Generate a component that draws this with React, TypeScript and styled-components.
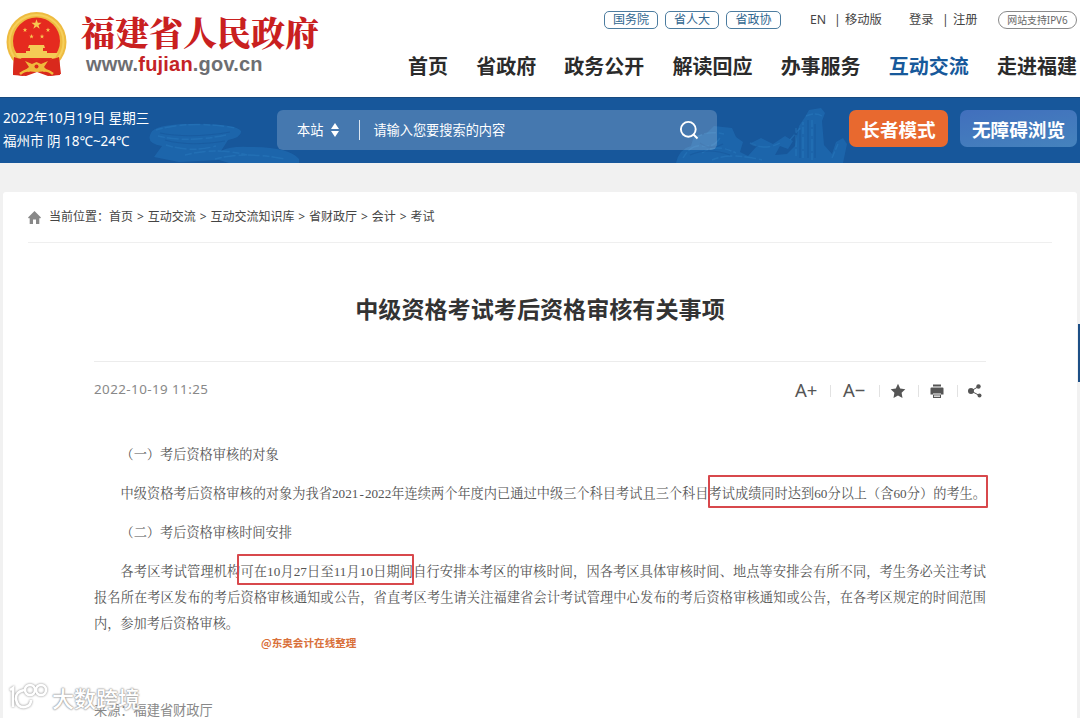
import React from "react";
import styled, { createGlobalStyle } from "styled-components";

const sans = `"Noto Sans", "Noto Sans CJK SC", sans-serif`;
const cjk = `"Noto Sans CJK SC", "Noto Sans", sans-serif`;

const Global = createGlobalStyle`
  * { box-sizing: border-box; }
  body { margin: 0; background: #f1f1f1; font-family: ${sans}; color: #333; overflow: hidden; }
`;

const Page = styled.div`
  width: 1080px; height: 718px; overflow: hidden; position: relative;
  display: flex; flex-direction: column;
`;
const Header = styled.header`
  height: 97px; background: #fff; display: flex; flex: none; padding-left: 5px;
`;
const Emblem = styled.svg`width: 63px; height: 66px; margin-top: 11px; flex: none;`;
const Brand = styled.div`margin-left: 13px; padding-top: 10px; width: 300px; flex: none; white-space: nowrap;`;
const BrandName = styled.div`
  font: 900 34px/44px "Noto Serif CJK SC", "Noto Sans CJK SC", serif; color: #c9201f; height: 44px;
`;
const BrandUrl = styled.div`
  font: bold 20px/20px "Liberation Sans", sans-serif; color: #6d6e72; padding-left: 5px; letter-spacing: 0.2px;
  b { color: #c42327; }
`;
const HeaderRight = styled.div`flex: 1; min-width: 0; display: flex; flex-direction: column; white-space: nowrap;`;
const TopLinks = styled.div`
  display: flex; align-items: center; height: 20px; margin-top: 10px; margin-left: 223px;
  font: 12.3px/18px ${sans}; color: #444;
`;
const Pill = styled.span<{ $w: number; $grey?: boolean }>`
  width: ${p => p.$w}px; height: 18px; border: 1px solid ${p => (p.$grey ? "#8a8a8a" : "#4c7c9f")};
  border-radius: ${p => (p.$grey ? 9 : 5)}px; color: ${p => (p.$grey ? "#666" : "#2f668f")};
  font-size: ${p => (p.$grey ? 9.9 : 12)}px; line-height: 16px; text-align: center; margin-right: 7px; flex: none;
`;
const TopText = styled.span<{ $w: number }>`width: ${p => p.$w}px; flex: none;`;
const Nav = styled.nav`
  display: flex; justify-content: space-between; margin: 20px 3px 0 27px;
  font: bold 20px/32px ${cjk}; color: #2b2b2b;
`;
const NavItem = styled.a<{ $active?: boolean }>`color: ${p => (p.$active ? "#17599b" : "inherit")};`;

const Banner = styled.section`
  height: 66px; flex: none; background: #17579b; display: flex; color: #fff; position: relative;
  border-top: 1px solid #174a80;
`;
const BannerArt = styled.svg`position: absolute; left: 0; top: 0; width: 1080px; height: 65px;`;
const Weather = styled.div`
  width: 277px; padding: 9px 0 0 3px; font: 13.5px/23px ${sans}; position: relative; white-space: nowrap;
`;
const Search = styled.div`
  width: 440px; height: 40px; margin-top: 12px; border-radius: 6px; background: rgba(255,255,255,.2);
  display: flex; align-items: center; font: 13.2px/20px ${sans}; padding: 0 18px 0 20px; position: relative;
`;
const Sorter = styled.svg`width: 8px; height: 14px; margin-left: 8px;`;
const Divider = styled.i`width: 1px; height: 20px; background: #dce6f1; margin: 0 13px 0 20px;`;
const Lens = styled.svg`width: 20px; height: 20px; margin-left: auto;`;
const ModeButton = styled.button<{ $w: number; $orange?: boolean }>`
  width: ${p => p.$w}px; height: 37px; margin-top: 12px; border: 0; border-radius: 7px; padding: 0;
  color: #fff; font: bold 18.6px/36px ${cjk}; position: relative; white-space: nowrap;
  background: ${p => (p.$orange ? "#e8692f" : "linear-gradient(170deg, #416fbd, #4583bd)")};
`;
const Modes = styled.div`display: flex; gap: 12px; margin-left: 132px;`;

const Card = styled.main`
  margin: 29px 3px 0; background: #fff; border-radius: 3px 3px 0 0; flex: 1; min-height: 0;
  display: flex; flex-direction: column; white-space: nowrap;
`;
const Crumbs = styled.div`
  height: 51px; margin: 0 25px; border-bottom: 1px solid #efefef; display: flex; align-items: center;
  font: 12px/18px ${sans}; color: #444; word-spacing: 0.8px; flex: none;
`;
const HomeIcon = styled.svg`width: 13px; height: 13px; margin-right: 8px; margin-top: 1px;`;
const Title = styled.h1`
  margin: 47px 0 0; text-align: center; font: bold 23.1px/36px ${cjk}; color: #333; height: 71px; flex: none;
`;
const Meta = styled.div`
  margin: 0 91px; border-top: 1px solid #ececec; height: 56px; display: flex; align-items: center; flex: none;
  justify-content: space-between; font: 13.4px/20px ${sans}; color: #888; padding-bottom: 2px;
`;
const Stamp = styled.time`letter-spacing: 0.42px;`;
const Tools = styled.div`display: flex; align-items: center; color: #555; padding-top: 4px;`;
const FontTool = styled.span<{ $last?: boolean }>`
  font: 18.5px/20px ${sans}; width: 24px; margin-right: ${p => (p.$last ? 12 : 11)}px; margin-top: -2px;
`;
const Bar = styled.i<{ $gap: number }>`width: 1px; height: 12px; background: #e2e2e2; margin-right: ${p => p.$gap}px;`;
const ToolIcon = styled.svg<{ $gap: number }>`width: 16px; height: 16px; margin-right: ${p => p.$gap}px;`;

const Article = styled.article`
  padding: 25px 91px 0; font: 13.2px/26px "Liberation Serif", "Noto Serif CJK SC", "Noto Sans CJK SC", serif; color: #555;
  font-weight: 400;
`;
const Line = styled.p<{ $indent?: boolean; $fill?: boolean; $gap?: number }>`
  margin: 0 0 ${p => p.$gap ?? 0}px; height: 26px; padding-left: ${p => (p.$indent ? 26.5 : 0)}px;
  text-align-last: ${p => (p.$fill ? "justify" : "left")};
`;
const Years = styled.span`display: inline-flex;`;
const Dash = styled.span`padding: 0 1.1px;`;
const Mark = styled.span`position: relative;`;
const Frame = styled.i<{ $w: number; $l: number; $t: number; $h: number }>`
  position: absolute; left: ${p => p.$l}px; top: ${p => p.$t}px; width: ${p => p.$w}px; height: ${p => p.$h}px;
  border: 2px solid #d8484c; border-radius: 1px;
`;
const Credit = styled.div`padding-left: 258px; font: 600 10.6px/16px ${cjk}; color: #d9703a; margin-top: -2px;`;
const Source = styled.div`padding: 49px 0 0 91px; font: 13.2px/20px ${sans}; color: #888;`;
const SideTab = styled.div`position: absolute; right: 0; top: 324px; width: 2px; height: 58px; background: #1d4f86;`;
const Watermark = styled.div`
  position: absolute; left: 8px; top: 682px; display: flex; align-items: center; height: 30px;
  font: 500 22px/30px ${cjk}; color: #fff; white-space: nowrap;
  text-shadow: 0 0 1px #999, 0 0 2px #999, 0 0 2px #aaa;
`;
const WatermarkLogo = styled.svg`width: 40px; height: 30px; margin-right: 4px; filter: drop-shadow(0 0 1px #888);`;

const pageLinks = ["首页", "省政府", "政务公开", "解读回应", "办事服务", "互动交流", "走进福建"];
const star = "M0-5 1.2-1.6 4.8-1.6 1.9.6 3 4 0 1.9-3 4-1.9.6-4.8-1.6-1.2-1.6Z";

export default function App() {
  return (
    <Page>
      <Global />
      <Header>
        <Emblem viewBox="0 0 63 66">
          <path d="M9 42h45l1 22-12 1-11-4-11 4-13-1Z" fill="#d9291c" />
          <circle cx="31.500" cy="31" r="30" fill="#eebb40" />
          <circle cx="31.500" cy="31" r="27" fill="none" stroke="#f6cf5a" strokeWidth="2" />
          <circle cx="31.500" cy="30" r="23.500" fill="#e52a1f" />
          <path d={star} transform="translate(31.500 13.500) scale(1.050)" fill="#f8c850" />
          <path d={star} transform="translate(20 19) scale(.48)" fill="#f8c850" />
          <path d={star} transform="translate(43 19) scale(.48)" fill="#f8c850" />
          <path d={star} transform="translate(26.500 25.500) scale(.48)" fill="#f8c850" />
          <path d={star} transform="translate(37 25.500) scale(.48)" fill="#f8c850" />
          <path d="M24 34h15l1 3h-2v3h4v2H21v-2h4v-3h-2ZM10 42h43l-3 5H13Z" fill="#f4cb55" />
          <path d="M9 46q12 4 17 2l5.500 2 5.500-2q6 2 17-2l2 17-11 2-5-7-8 2-8-2-6 7-10-2Z" fill="#d9291c" />
          <path d="m20 50 7 3 4.500-2 4.500 2 7-3-4 6 4 4-6-1-5.500 2-5.500-2-7 1 5-4Z" fill="#efb93c" />
          <circle cx="31.500" cy="55.500" r="2" fill="#d9291c" />
          <path d="M15 63q6-5 10-3M48 63q-6-5-10-3" fill="none" stroke="#efbd3c" strokeWidth="2.500" />
        </Emblem>
        <Brand>
          <BrandName>福建省人民政府</BrandName>
          <BrandUrl>www.<b>fujian</b>.gov.cn</BrandUrl>
        </Brand>
        <HeaderRight>
          <TopLinks>
            <Pill $w={54}>国务院</Pill>
            <Pill $w={54}>省人大</Pill>
            <Pill $w={55}>省政协</Pill>
            <TopText $w={22} />
            <TopText $w={24}>EN</TopText>
            <TopText $w={11}>|</TopText>
            <TopText $w={64}>移动版</TopText>
            <TopText $w={33}>登录</TopText>
            <TopText $w={11}>|</TopText>
            <TopText $w={45}>注册</TopText>
            <Pill $w={79} $grey>网站支持IPV6</Pill>
          </TopLinks>
          <Nav>
            {pageLinks.map(label => (
              <NavItem key={label} $active={label === "互动交流"}>{label}</NavItem>
            ))}
          </Nav>
        </HeaderRight>
      </Header>

      <Banner>
        <BannerArt viewBox="0 0 1080 65">
          <g fill="#2274bc" opacity=".5">
            <path d="M151 35q3-8 35-9 50-1 55 7 1 6-13 9l-7 11q10-5 28-4 40 0 50 12v4h-70l-10-3-40 2-25-5 8-11q-17-3-11-13Z" />
            <path d="M676 65q3-14 15-17l3-10 12-2 8-8 18 2 4 9 7 5-3 10 8 4 9-10-6-3 10-5 12 6 12-8 8 5-5 8-8-3-5 9 12-1 8-8 4-20 6-9 4-7 12-2 4 5-3 8 2 24 8 9 4-12 7-4 4 6-4 19Z" />
          </g>
          <g fill="none" stroke="#2d80c4" strokeWidth="1.500" opacity=".4" strokeDasharray="7 2 12 3">
            <path d="M156 32q34-10 80-2M158 38q30 7 68-1M166 47q25 8 50 1M185 57q30-8 62 0M215 61q30-8 70 0" />
            <path d="M683 60q8-14 20-12t18-10M696 40q10-8 28-4M702 55q14-10 34 0M712 62q18-8 50 0M750 45q14 8 30 0M796 58V30M803 60V24M812 62V22M806 18q10-4 16 0M790 42l10-12M832 60l6-14" />
          </g>
          <g fill="none" stroke="#17579b" strokeWidth="1.200" opacity=".6">
            <path d="M160 35q30 6 70-1M165 42q25 7 60 1M800 32v28M808 22v38M815 26v34M700 45q10 8 23 1M690 57q18-8 40 0" />
          </g>
        </BannerArt>
        <Weather>2022年10月19日 星期三<br />福州市 阴 18℃~24℃</Weather>
        <Search>
          本站
          <Sorter viewBox="0 0 8 14"><path d="M4 0 8 6H0ZM4 14 0 8h8Z" fill="#fff" /></Sorter>
          <Divider />
          请输入您要搜索的内容
          <Lens viewBox="0 0 20 20" fill="none" stroke="#fff" strokeWidth="1.900"><circle cx="9.300" cy="9.300" r="7.400" /><path d="m14.500 14.500 4 4" /></Lens>
        </Search>
        <Modes>
          <ModeButton $w={99} $orange>长者模式</ModeButton>
          <ModeButton $w={117}>无障碍浏览</ModeButton>
        </Modes>
      </Banner>

      <Card>
        <Crumbs>
          <HomeIcon viewBox="0 0 13 13"><path d="M6.500 0 13 6.500l-1 1-.7-.6V13H8V8.500H5V13H1.700V6.900l-.7.6-1-1Z" fill="#888" /></HomeIcon>
          当前位置：首页 &gt; 互动交流 &gt; 互动交流知识库 &gt; 省财政厅 &gt; 会计 &gt; 考试
        </Crumbs>
        <Title>中级资格考试考后资格审核有关事项</Title>
        <Meta>
          <Stamp>2022-10-19 11:25</Stamp>
          <Tools>
            <FontTool>A+</FontTool><Bar $gap={12} />
            <FontTool $last>A−</FontTool><Bar $gap={10} />
            <ToolIcon $gap={12} viewBox="0 0 16 16" fill="#555"><path d="m8 .8 2.200 4.700 5.100.7-3.700 3.600.9 5.200L8 12.500 3.500 15l.9-5.200L.7 6.200l5.100-.7Z" /></ToolIcon>
            <Bar $gap={10} />
            <ToolIcon $gap={12} viewBox="0 0 16 16" fill="#555"><path d="M4 1.500h8v2H4ZM2.500 4.500h11q1 0 1 1v6H12v-1H4v1H1.500v-6q0-1 1-1ZM4 11.500h8v3.500H4Zm1 1v1.200h6v-1.200Z" /></ToolIcon>
            <Bar $gap={9} />
            <ToolIcon $gap={3} viewBox="0 0 16 16" fill="#555"><circle cx="4" cy="8" r="3" /><circle cx="11.500" cy="3.500" r="2.200" /><circle cx="12.500" cy="12.500" r="2" /><path d="m11.500 3.500-7.500 4.500 8.500 4.500" fill="none" stroke="#555" /></ToolIcon>
          </Tools>
        </Meta>
        <Article>
          <Line $indent $gap={13}>（一）考后资格审核的对象</Line>
          <Line $indent $fill $gap={13}>中级资格考后资格审核的对象为我省<Years>2021<Dash>-</Dash>2022</Years>年连续两个年度内已通过中级三个科目考试且三个科目<Mark>考试成绩同时达到60分以上（含60分）的考生。<Frame $l={-1} $t={-11} $w={280} $h={33} /></Mark></Line>
          <Line $indent $gap={13}>（二）考后资格审核时间安排</Line>
          <Line $indent $fill>各考区考试管理机构<Mark>可在10月27日至11月10日期间<Frame $l={-3} $t={-10} $w={177} $h={31} /></Mark>自行安排本考区的审核时间，因各考区具体审核时间、地点等安排会有所不同，考生务必关注考试</Line>
          <Line $fill>报名所在考区发布的考后资格审核通知或公告，省直考区考生请关注福建省会计考试管理中心发布的考后资格审核通知或公告，在各考区规定的时间范围</Line>
          <Line>内，参加考后资格审核。</Line>
        </Article>
        <Credit>@东奥会计在线整理</Credit>
        <Source>来源：福建省财政厅</Source>
      </Card>
      <SideTab />
      <Watermark>
        <WatermarkLogo viewBox="0 0 40 30" fill="none" stroke="#fff" strokeWidth="2.600">
          <path d="M2 8 5 6v19M16 8q-9 2-8 9 1 9 9 8 6-1 6-7" />
          <circle cx="22" cy="8" r="5" /><circle cx="33" cy="8" r="5" />
        </WatermarkLogo>
        大数跨境
      </Watermark>
    </Page>
  );
}
